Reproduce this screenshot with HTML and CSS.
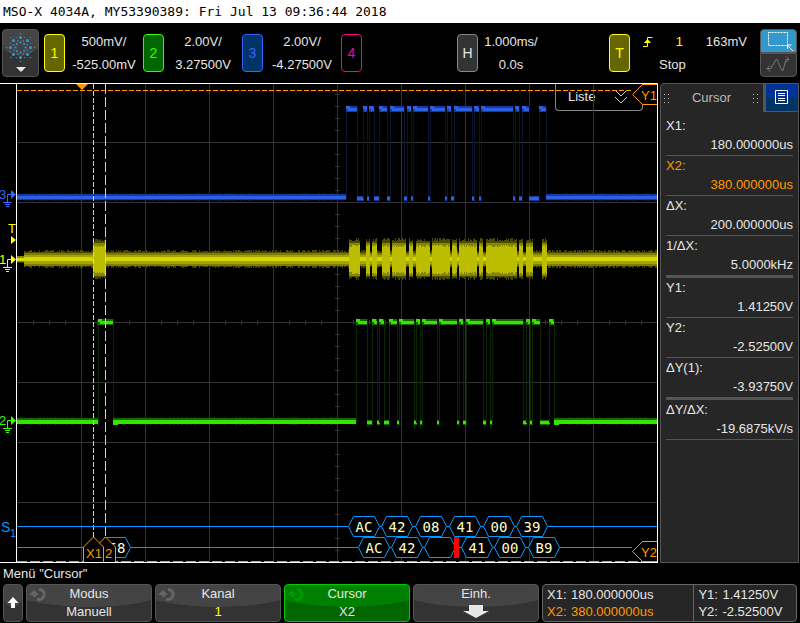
FILE: index.html
```html
<!DOCTYPE html>
<html lang="de">

<head>
    <meta charset="UTF-8">
    <meta name="viewport" content="width=device-width, initial-scale=1.0">
    <title>MSO-X 4034A</title>
    <link rel="stylesheet" href="styles.css">
</head>

<body>
    <h1 class="title">MSO-X 4034A, MY53390389: Fri Jul 13 09:36:44 2018</h1>

    <header class="status">
        <button class="logo" aria-label="Hauptmenü">
            <svg width="35" height="46" viewBox="0 0 35 46">
                <g id="spark" fill="#3399cc"></g>
                <path d="M13 37h10l-5 5z" fill="#e6e6e6" />
            </svg>
        </button>
        <div class="channel">
            <button class="badge ch1">1</button>
            <div class="values"><span>500mV/</span><span>-525.00mV</span></div>
        </div>
        <div class="channel">
            <button class="badge ch2">2</button>
            <div class="values"><span>2.00V/</span><span>3.27500V</span></div>
        </div>
        <div class="channel">
            <button class="badge ch3">3</button>
            <div class="values"><span>2.00V/</span><span>-4.27500V</span></div>
        </div>
        <div class="channel">
            <button class="badge ch4">4</button>
        </div>
        <div class="channel">
            <button class="badge horizontal">H</button>
            <div class="values time"><span>1.000ms/</span><span>0.0s</span></div>
        </div>
        <div class="channel">
            <button class="badge ch1">T</button>
            <div class="trigger">
                <div class="trigger_row">
                    <svg width="10" height="12" viewBox="0 0 10 12" fill="none" stroke="#ff0">
                        <path d="M0 10.500h4.500v-9h5" />
                        <path d="M1 7h7L4.500 3z" fill="#ff0" stroke="none" />
                    </svg>
                    <span class="source">1</span>
                    <span>163mV</span>
                </div>
                <div class="state">Stop</div>
            </div>
        </div>
        <div class="touch">
            <button class="touch_zoom" aria-label="Bereich zoomen">
                <svg width="35" height="22" viewBox="0 0 35 22" fill="none" stroke="#fff">
                    <path d="M7.500 2.500h19v13h-19z" stroke-dasharray="2 1" />
                    <path d="M26 15l6 6M26.500 19v-4h4" />
                </svg>
            </button>
            <button class="touch_drag" aria-label="Signal verschieben">
                <svg width="35" height="22" viewBox="0 0 35 22" fill="none" stroke="#777">
                    <path d="M6 14.500h4l5-9h1l5 11h1l3-11h3M9 11.500l-3 3 3 3M25 2.500l3 3-3 3" />
                </svg>
            </button>
        </div>
    </header>

    <main class="main">
        <div class="plot">
            <button class="list">Liste
                <svg width="14" height="16" viewBox="0 0 14 16" fill="none" stroke="#ccc">
                    <path d="M1 1l6 6 6-6M1 8l6 6 6-6" />
                </svg>
            </button>
            <svg class="screen" viewBox="0 0 660 480">
                <g id="grid" shape-rendering="crispEdges"></g>
                <g id="traces" shape-rendering="crispEdges"></g>

                <!-- cursors -->
                <g class="cursor_lines" shape-rendering="crispEdges">
                    <path d="M17 7.500h615" class="y1" />
                    <path d="M17 478.500h640" class="y2" />
                    <path d="M93.500 1v453" class="x1" />
                    <path d="M105.500 1v453" class="x2" />
                </g>
                <path d="M76 1h12l-6 6z" fill="#ff9900" />

                <g id="bus"></g>

                <!-- X2 tag sits half behind X1 -->
                <g class="tag">
                    <path d="M95.500 479v-15l10-10 10 10v15" />
                    <text x="105" y="475">2</text>
                    <path d="M83.500 479v-15l10-10 10 10v15" />
                    <text x="86" y="475">X1</text>
                    <path d="M657 1.500h-14.500l-10 10 10 10H657" />
                    <text x="641" y="17">Y1</text>
                    <path d="M657 458.500h-14.500l-10 10 10 10H657" />
                    <text x="641" y="474">Y2</text>
                </g>

                <path d="M0 .5h657.500v479M0 479.500h658M16.500 0v479" class="frame" />
                <g id="markers"></g>
                <text x="1" y="449" class="bus_name">S<tspan class="bus_index" dy="5">1</tspan></text>
            </svg>
        </div>

        <aside class="panel">
            <div class="tabs">
                <div class="tab">
                    <svg width="6" height="9" viewBox="0 0 6 9" fill="#bbb">
                        <path d="M0 0h1v1H0zM4 0h1v1H4zM0 4h1v1H0zM4 4h1v1H4zM0 8h1v1H0zM4 8h1v1H4z" />
                    </svg>
                    <span>Cursor</span>
                    <svg width="6" height="9" viewBox="0 0 6 9" fill="#bbb">
                        <path d="M0 0h1v1H0zM4 0h1v1H4zM0 4h1v1H0zM4 4h1v1H4zM0 8h1v1H0zM4 8h1v1H4z" />
                    </svg>
                </div>
                <button class="menu" aria-label="Menü">
                    <svg width="14" height="15" viewBox="0 0 14 15" fill="none" stroke="#fff">
                        <path d="M.5.5h12v13H.5zM3 3.500h7M3 5.500h7M3 8.500h7M3 10.500h7" />
                    </svg>
                </button>
            </div>
            <dl class="measures">
                <div><dt>X1:</dt><dd>180.000000us</dd></div>
                <div class="active"><dt>X2:</dt><dd>380.000000us</dd></div>
                <div><dt>ΔX:</dt><dd>200.000000us</dd></div>
                <div class="last"><dt>1/ΔX:</dt><dd>5.0000kHz</dd></div>
                <div><dt>Y1:</dt><dd>1.41250V</dd></div>
                <div><dt>Y2:</dt><dd>-2.52500V</dd></div>
                <div class="last"><dt>ΔY(1):</dt><dd>-3.93750V</dd></div>
                <div><dt>ΔY/ΔX:</dt><dd>-19.6875kV/s</dd></div>
            </dl>
        </aside>
    </main>

    <h2 class="menu_title">Menü "Cursor"</h2>

    <footer class="softkeys">
        <button class="key" aria-label="Zurück">
            <svg width="12" height="12" viewBox="0 0 12 12" fill="#fff">
                <path d="M6 0l5.500 6H8v5H4V6H.5z" />
            </svg>
        </button>
        <button class="key">
            <svg class="knob" width="19" height="16" viewBox="0 0 19 16">
                <path d="M10 2.500A5 5 0 1 1 8 12" />
                <path d="M0 8l5-5 5 5H7v2H4V8z" class="head" />
            </svg>
            <span>Modus</span><span>Manuell</span>
        </button>
        <button class="key">
            <svg class="knob" width="19" height="16" viewBox="0 0 19 16">
                <path d="M10 2.500A5 5 0 1 1 8 12" />
                <path d="M0 8l5-5 5 5H7v2H4V8z" class="head" />
            </svg>
            <span>Kanal</span><span class="source">1</span>
        </button>
        <button class="key selected">
            <svg class="knob" width="19" height="16" viewBox="0 0 19 16">
                <path d="M10 2.500A5 5 0 1 1 8 12" />
                <path d="M0 8l5-5 5 5H7v2H4V8z" class="head" />
            </svg>
            <span>Cursor</span><span>X2</span>
        </button>
        <button class="key">
            <span>Einh.</span>
            <span class="down">
                <svg width="26" height="14" viewBox="0 0 26 14" fill="#e6e6e6">
                    <path d="M6 0h14v6h6l-13 7L0 6h6z" />
                </svg>
            </span>
        </button>
        <div class="readout">
            <div class="readout_x">
                <span>X1:</span><span>180.000000us</span>
                <span class="active">X2:</span><span class="active">380.000000us</span>
            </div>
            <div class="readout_y">
                <span>Y1:</span><span>1.41250V</span>
                <span>Y2:</span><span>-2.52500V</span>
            </div>
        </div>
    </footer>

    <script src="plot.js"></script>
</body>

</html>
```

FILE: styles.css
```css
* {
    box-sizing: border-box;
}

body {
    margin: 0;
    background: #000;
    color: #e6e6e6;
    font: 13px/18px "Liberation Sans", Arial, sans-serif;
}

button {
    margin: 0;
    padding: 0;
    border: 1px solid #666;
    border-radius: 4px;
    background: #333;
    color: inherit;
    font: inherit;
}

svg {
    display: block;
}

.title {
    margin: 0;
    padding-left: 3px;
    height: 23px;
    background: #fff;
    color: #000;
    font: 13px/23px "DejaVu Sans Mono", monospace;
}

/* status bar */
.status {
    display: grid;
    grid-template-columns: 42px repeat(3, 99px) 1fr 152px 151px 37px;
    align-items: center;
    height: 60px;
    padding: 0 3px 0 2px;
}

.logo {
    width: 37px;
    height: 48px;
    border-color: #555;
    background: radial-gradient(ellipse 70% 26px at 50% 0, #444 98%, #333 100%);
}

.channel {
    display: flex;
    align-items: center;
}

.badge {
    flex: none;
    width: 21px;
    height: 38px;
    font-size: 14px;
}

.ch1 {
    border-color: #ff0;
    background: #660;
    color: #ff0;
}

.ch2 {
    border-color: #3f0;
    background: #060;
    color: #3f0;
}

.ch3 {
    border-color: #36f;
    background: #036;
    color: #36f;
}

.ch4 {
    border-color: #f09;
    background: #000;
    color: #f09;
}

.horizontal {
    border-color: #888;
}

.values {
    display: flex;
    flex-direction: column;
    width: 78px;
    line-height: 23px;
    text-align: center;
}

.time {
    width: 66px;
}

.trigger {
    width: 117px;
    padding-left: 13px;
    line-height: 23px;
}

.trigger_row {
    display: flex;
    align-items: center;
    justify-content: space-between;
}

.state {
    padding-left: 16px;
}

.source {
    color: #ff0;
}

.touch {
    display: flex;
    flex-direction: column;
    height: 48px;
}

.touch button {
    flex: 1;
    border-color: #555;
}

.touch .touch_zoom {
    border-radius: 4px 4px 0 0;
    background: #39c;
}

.touch .touch_drag {
    border-radius: 0 0 4px 4px;
}

/* plot and side panel */
.main {
    display: grid;
    grid-template-columns: minmax(0, 1fr) 139px;
    padding-right: 1px;
}

.plot {
    position: relative;
}

.screen {
    position: relative;
    width: 100%;
    pointer-events: none;
}

.list {
    position: absolute;
    top: 1px;
    right: 17px;
    display: flex;
    justify-content: space-between;
    align-items: center;
    width: 88px;
    height: 27px;
    padding: 0 14px 0 12px;
    border-color: #888;
    border-top: 0;
    border-radius: 0 0 4px 4px;
    background: none;
}

.frame {
    fill: none;
    stroke: #fff;
}

.cursor_lines path {
    stroke: #ff9900;
}

.cursor_lines .y1 {
    stroke-dasharray: 5 2;
}

.cursor_lines .y2 {
    stroke-dasharray: 10 3;
}

.cursor_lines .x1 {
    stroke: #ffcc66;
    stroke-dasharray: 5 2;
}

.cursor_lines .x2 {
    stroke: #ffcc66;
    stroke-dasharray: 10 3;
}

.tag path {
    fill: #000;
    stroke: #ff9900;
}

.tag text {
    fill: #ff9900;
    font-size: 13px;
}

.bus_line {
    fill: #000;
    stroke: #0099ff;
}

.bus_text {
    fill: #ffffcc;
    font: 14px "DejaVu Sans Mono", monospace;
    text-anchor: middle;
}

.bus_name {
    fill: #0099ff;
    font-size: 14px;
}

.bus_index {
    font-size: 10px;
}

.marker_text {
    font-size: 13px;
}

.panel {
    border: 1px solid #555;
    border-radius: 4px 0 0 0;
    background: #262626;
}

.tabs {
    display: flex;
    height: 28px;
}

.tab {
    flex: 1;
    display: flex;
    align-items: center;
    justify-content: space-between;
    padding: 0 4px 0 3px;
    color: #bbb;
}

.menu {
    display: flex;
    align-items: center;
    justify-content: center;
    width: 35px;
    border-width: 0 0 1px 3px;
    border-color: #555;
    border-radius: 0;
    background: linear-gradient(#039 50%, #036 50%);
}

.measures {
    margin: 0;
    padding: 4px 5px 0;
}

.measures div {
    border-bottom: 1px solid #555;
}

.measures .last {
    border-bottom-width: 3px;
}

.measures dt {
    line-height: 19px;
}

.measures dd {
    margin: 0;
    line-height: 20px;
    text-align: right;
}

.active {
    color: #ff9900;
}

/* bottom menu */
.menu_title {
    margin: 0;
    padding-left: 3px;
    font-size: 13px;
    font-weight: normal;
    line-height: 21px;
}

.softkeys {
    display: grid;
    grid-template-columns: 20px repeat(4, 1fr) 255px;
    gap: 3px;
    height: 39px;
    padding: 0 3px 1px;
}

.key {
    position: relative;
    display: flex;
    flex-direction: column;
    align-items: center;
    justify-content: center;
    border-color: #555;
    background: radial-gradient(ellipse 70% 22px at 50% 0, #444 98%, #333 100%);
}

.selected {
    border-color: #0c0;
    background: radial-gradient(ellipse 70% 22px at 50% 0, #008000 98%, #060 100%);
}

.knob {
    position: absolute;
    top: 2px;
    left: 2px;
    fill: none;
    stroke: #666;
    stroke-width: 3px;
}

.knob .head {
    fill: #666;
    stroke: none;
}

.selected .knob {
    stroke: #090;
}

.selected .head {
    fill: #090;
}

.down {
    display: flex;
    align-items: center;
    height: 18px;
}

.readout {
    display: flex;
    border: 1px solid #666;
    border-radius: 4px;
    background: #262626;
}

.readout_x,
.readout_y {
    display: grid;
    grid-template-columns: 24px auto;
    justify-content: start;
    align-content: center;
    padding-left: 4px;
    line-height: 17px;
}

.readout_x {
    flex: 3;
    border-right: 1px solid #666;
}

.readout_y {
    flex: 2;
}
```

FILE: plot.js
```js
// pulses as [start, end] in plot pixels
const blueHigh = [[346, 357], [363, 367], [369, 374], [379, 387], [390, 404], [407, 411], [413, 428], [430, 445],
    [447, 451], [454, 472], [474, 479], [481, 513], [515, 519], [522, 529], [539, 546]]
const greenHigh = [[98, 113], [356, 367], [372, 377], [379, 384], [389, 397], [399, 414], [416, 420], [422, 437],
    [439, 457], [459, 463], [466, 483], [486, 490], [492, 523], [526, 530], [532, 540], [549, 554]]
const bursts = [[93, 106], [349, 360], [366, 370], [372, 377], [382, 390], [392, 406], [409, 413], [416, 430],
    [432, 450], [452, 457], [459, 477], [479, 483], [486, 517], [519, 523], [526, 533], [542, 547]]

let seed = 7
function rand(n) { // repeatable noise 0..n-1
    seed = (seed * 1103515245 + 12345) % 2147483648
    return Math.floor(seed / 2147483648 * n)
}

function rect(x, y, w, h, color) {
    return `<rect x="${x}" y="${y}" width="${w}" height="${h}" fill="${color}"/>`
}

// grid -------------------------
function drawGrid() {
    let out = ''
    for (let x = 81; x < 657; x += 64) out += rect(x, 1, 1, 478, '#333')
    for (let y = 59; y < 479; y += 60) out += rect(17, y, 640, 1, '#333')
    for (let y = 11; y < 479; y += 12) out += rect(335, y, 5, 1, '#333')
    for (let x = 33; x < 657; x += 16) out += rect(x, 237, 1, 5, '#333')
    return out
}

// digital looking channels -------------------------
function drawPulses(high, ch) {
    let out = ''
    let x = 17
    high.forEach(function (p, i) {
        out += drawLow(x, p[0], ch, i === 0)
        out += rect(p[0], ch.high - 2, 1, ch.low - ch.high + 6 + rand(5), ch.edge)
        out += rect(p[1], ch.high - 1, 1, ch.low - ch.high + 7 + rand(5), ch.edge)
        out += rect(p[0], ch.high - 1, p[1] - p[0], 6, ch.dim)
        out += rect(p[0], ch.high - 1, 4, 3, ch.bright)
        out += rect(p[0] + 2, ch.high + 1, p[1] - p[0] - 2, 3, ch.bright)
        x = p[1]
    })
    return out + drawLow(x, 657, ch, false)
}

function drawLow(from, to, ch, first) {
    let out = ''
    if (to - from < 15) {
        out += rect(from, ch.low + 1, to - from + 1, 5, ch.dim)
        out += rect(from, ch.low + 2, to - from + 1, 3, ch.bright)
        return out
    }
    for (let x = from; x < to; x++) {
        if (rand(3) === 0) out += rect(x, ch.low - 2, 1, 8, ch.edge)
    }
    out += rect(from, ch.low - 1, to - from, 6, ch.dim)
    out += rect(from, ch.low + 1, to - from, ch.thick, ch.bright)
    if (!first && ch.settles) out += rect(from, ch.low + 2, 5, 4, ch.bright)
    return out
}

// analog channel -------------------------
function drawAnalog() {
    let out = ''
    for (let x = 17; x < 657; x++) {
        const loud = bursts.some(b => x >= b[0] && x < b[1])
        if (loud) {
            const a = 18 + rand(4)
            out += rect(x, 176 - a, 1, a * 2, '#4a4a00')
            out += rect(x, 160, 1, 33, '#868600')
            const c = 12 + rand(3)
            out += rect(x, 176 - c, 1, c * 2 + 1, '#bcbc00')
        } else if (x < 24) {
            out += rect(x, 173, 1, 6, '#868600')
            out += rect(x, 175, 1, 3, '#dcdc00')
        } else {
            const a = 7 + rand(3)
            out += rect(x, 176 - a, 1, a * 2, '#4a4a00')
            out += rect(x, 170, 1, 13, '#7c7c00')
            out += rect(x, 172, 1, 9, '#a4a400')
            out += rect(x, 174, 1, 4, '#d6d600')
        }
    }
    return out
}

// serial decode -------------------------
function frame(x, y, text, textX) {
    return `<path class="bus_line" d="M${x + .5} ${y + .5}l5-10h21l5 10-5 10h-21z"/>
        <text class="bus_text" x="${textX || x + 16}" y="${y + 6}">${text}</text>`
}

function drawBus() {
    let out = '<path class="bus_line" d="M17 443.500H657"/><path class="bus_line" d="M17 464.500H632"/>'
    const row1 = ['AC', '42', '08', '41', '00', '39']
    const row2 = ['AC', '42', '', '41', '00', 'B9']
    row1.forEach((t, i) => out += frame([348, 381, 415, 449, 483, 516][i], 443, t))
    row2.forEach((t, i) => out += frame([358, 391, 424, 461, 494, 528][i], 464, t))
    out += rect(454, 454, 5, 21, '#ff0000')
    out += frame(99, 464, '58', 117)
    return out
}

// ground markers on the left edge -------------------------
function marker(y, text, color) {
    return `<text class="marker_text" x="-1" y="${y + 5}" fill="${color}">${text}</text>
        <path d="M11 ${y - 4}l5 4.500-5 4.500z" fill="${color}"/>
        <path d="M11 ${y + .5}H7.500v8M3 ${y + 8.5}h9M5 ${y + 10.5}h5M6 ${y + 12.5}h3" fill="none" stroke="${color}"/>`
}

const blue = { high: 24, low: 112, thick: 3, bright: '#2b60e8', dim: '#1b3a96', edge: '#0a1430', settles: false }
const green = { high: 237, low: 336, thick: 4, bright: '#33e600', dim: '#176600', edge: '#0c2600', settles: true }

document.querySelector('#grid').innerHTML = drawGrid()
document.querySelector('#traces').innerHTML = drawPulses(blueHigh, blue) + drawAnalog() + drawPulses(greenHigh, green)
document.querySelector('#bus').innerHTML = drawBus()
document.querySelector('#markers').innerHTML = marker(111, '3', '#3366ff') + marker(176, '1', '#ffff00') +
    marker(337, '2', '#33ff00') +
    '<text class="marker_text" x="8" y="150" fill="#ffff00">T</text><path d="M11 153l5 4-5 4z" fill="#ffff00"/>'

// logo: eight rays of dots, shorter rays in between
function dot(r, angle, size) {
    return `<circle cx="${17.5 + r * Math.cos(angle)}" cy="${17.5 + r * Math.sin(angle)}" r="${size}"/>`
}
let dots = ''
for (let i = 0; i < 8; i++) {
    const a = i * Math.PI / 4
    dots += dot(5, a, 1) + dot(10, a, 1.5) + dot(14, a, .7)
    dots += dot(7, a + Math.PI / 8, .8) + dot(11, a + Math.PI / 8, .6)
}
document.querySelector('#spark').innerHTML = dots
```
